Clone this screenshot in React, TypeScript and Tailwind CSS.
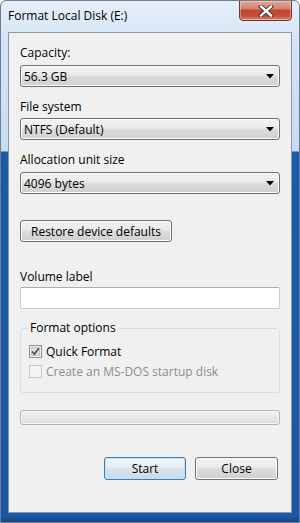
import React from "react";

const font = { fontFamily: '"Segoe UI", "Open Sans", "Noto Sans", sans-serif' };

function Combo({ value }: { value: string }) {
  return (
    <div className="h-[22px] w-full rounded-[3px] border border-[#707070] bg-[linear-gradient(to_bottom,#f2f2f2_0%,#ebebeb_45%,#dddddd_50%,#cfcfcf_100%)] flex items-center pl-[3px] pr-[3px] shadow-[inset_0_0_0_1px_#fcfcfc]">
      <span className="flex-1 text-[12px] leading-[15px] text-black">{value}</span>
      <svg width="8" height="5" viewBox="0 0 8 5" className="mr-[2px]">
        <path d="M0 0 H8 L4 4.5 Z" fill="#000" />
      </svg>
    </div>
  );
}

function Btn({ children, def, w }: { children: React.ReactNode; def?: boolean; w: string }) {
  return (
    <div
      className={
        "h-[23px] rounded-[3px] border flex items-center justify-center text-[12px] leading-[15px] text-black " +
        w +
        " " +
        (def
          ? "border-[#3c7fb1] bg-[linear-gradient(to_bottom,#f0f5f9_0%,#e6eef5_45%,#d9e4ed_50%,#ccd9e4_100%)] shadow-[inset_0_0_0_1px_#bfe0f5]"
          : "border-[#707070] bg-[linear-gradient(to_bottom,#f2f2f2_0%,#ebebeb_45%,#dddddd_50%,#cfcfcf_100%)] shadow-[inset_0_0_0_1px_#fcfcfc]")
      }
    >
      {children}
    </div>
  );
}

export default function App() {
  return (
    <div
      className="w-[300px] h-[523px] overflow-hidden rounded-t-[6px] border border-[#6d7d92] bg-[linear-gradient(to_bottom,#e6eff9_0px,#d5e4f4_40px,#c8dbf0_150px,#1c5ba9_151px,#1a58a5_515px,#163f7a_523px)] flex flex-col"
      style={font}
    >
      <div className="h-[31px] flex items-start shrink-0">
        <div className="pl-[7px] pt-[7px] text-[12px] leading-[16px] text-black flex-1">Format Local Disk (E:)</div>
        <div className="mt-[-1px] mr-[7px] w-[53px] h-[21px] rounded-b-[4px] border border-[#6b3a33] bg-[linear-gradient(to_bottom,#e6a495_0%,#d6826f_40%,#c0442e_50%,#c4513c_80%,#dc8a70_100%)] flex items-center justify-center shadow-[inset_0_0_0_1px_rgba(255,255,255,0.35)]">
          <svg width="16" height="12" viewBox="0 0 16 12">
            <path d="M3 1.5 L13 10.5 M13 1.5 L3 10.5" stroke="#3a2a28" strokeWidth="4.2" strokeLinecap="square" />
            <path d="M3 1.5 L13 10.5 M13 1.5 L3 10.5" stroke="#ffffff" strokeWidth="2.4" strokeLinecap="square" />
          </svg>
        </div>
      </div>
      <div className="mx-[7px] h-[481px] border border-[#8799ae] bg-[#f0f0f0] px-[11px] pt-[12px] flex flex-col">
        <div className="text-[12px] leading-[15px] text-black">Capacity:</div>
        <div className="mt-[5px]"><Combo value="56.3 GB" /></div>
        <div className="mt-[12px] text-[12px] leading-[15px] text-black">File system</div>
        <div className="mt-[4px]"><Combo value="NTFS (Default)" /></div>
        <div className="mt-[12px] text-[12px] leading-[15px] text-black">Allocation unit size</div>
        <div className="mt-[5px]"><Combo value="4096 bytes" /></div>
        <div className="mt-[26px] h-[22px] w-[152px] rounded-[3px] border border-[#707070] bg-[linear-gradient(to_bottom,#f2f2f2_0%,#ebebeb_45%,#dddddd_50%,#cfcfcf_100%)] shadow-[inset_0_0_0_1px_#fcfcfc] flex items-center justify-center text-[12px] leading-[15px] text-black">
          Restore device defaults
        </div>
        <div className="mt-[27px] text-[12px] leading-[15px] text-black">Volume label</div>
        <div className="mt-[3px] h-[22px] w-full border border-[#c5cdd8] border-t-[#abadb3] bg-white rounded-[2px]" />
        <div className="mt-[19px] relative h-[65px] w-full rounded-[3px] border border-[#d5dfe5] pt-[13px] pl-[8px]">
          <div className="absolute left-[7px] top-[-9px] px-[2px] bg-[#f0f0f0] text-[12px] leading-[15px] text-black">Format options</div>
          <div className="flex items-center h-[18px]">
            <svg width="13" height="13" viewBox="0 0 13 13">
              <rect x="0.5" y="0.5" width="12" height="12" fill="#f4f4f4" stroke="#8e8f8f" />
              <rect x="2.5" y="2.5" width="8" height="8" fill="#dcdcdc" stroke="#c4c4c4" />
              <path d="M3.2 6.6 L5.4 9.2 L9.8 3.2" stroke="#4c4c56" strokeWidth="1.6" fill="none" />
            </svg>
            <span className="ml-[4px] text-[12px] leading-[15px] text-black">Quick Format</span>
          </div>
          <div className="mt-[2px] flex items-center h-[18px]">
            <svg width="13" height="13" viewBox="0 0 13 13">
              <rect x="0.5" y="0.5" width="12" height="12" fill="#f4f4f4" stroke="#c8c8c8" />
            </svg>
            <span className="ml-[4px] text-[12px] leading-[15px] text-[#8d8d8d]">Create an MS-DOS startup disk</span>
          </div>
        </div>
        <div className="mt-[17px] h-[15px] w-full rounded-[3px] border border-[#b2b2b2] bg-[linear-gradient(to_bottom,#f3f3f3_0%,#e6e6e6_50%,#dadada_100%)] shadow-[inset_0_0_0_1px_#f8f8f8]" />
        <div className="mt-[32px] flex justify-end gap-[9px] pr-[2px]">
          <Btn def w="w-[82px]">Start</Btn>
          <Btn w="w-[83px]">Close</Btn>
        </div>
      </div>
    </div>
  );
}
